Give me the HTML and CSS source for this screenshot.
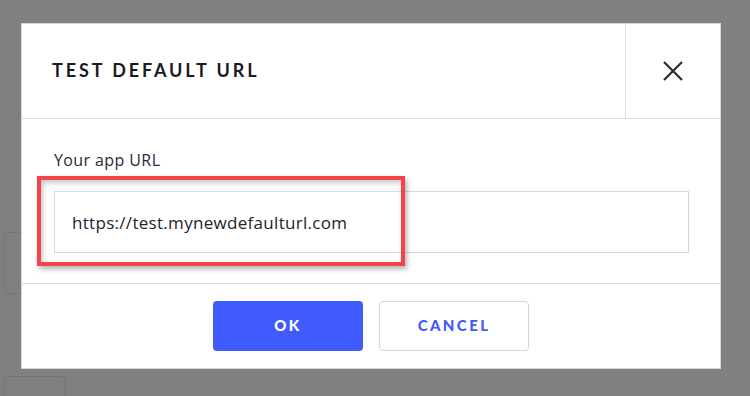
FILE: index.html
```html
<!DOCTYPE html>
<html lang="en">
<head>
  <meta charset="UTF-8">
  <title>Test default URL</title>
  <link rel="stylesheet" href="styles.css">
</head>
<body>
  <div class="page">
    <div class="ghost ghost-side"></div>
    <div class="ghost ghost-bottom"></div>
  </div>

  <div class="overlay">
    <div class="dialog">
      <div class="dialog-header">
        <h2 class="dialog-title">TEST DEFAULT URL</h2>
        <button class="close-btn" aria-label="Close">
          <svg width="22" height="22" viewBox="0 0 22 22">
            <path d="M2 2 L20 20 M20 2 L2 20" stroke="#2b2b33" stroke-width="2.2" fill="none"/>
          </svg>
        </button>
      </div>
      <div class="dialog-body">
        <label class="field-label" for="appUrl">Your app URL</label>
        <input class="field-input" id="appUrl" type="text" value="https://test.mynewdefaulturl.com" readonly>
      </div>
      <div class="dialog-footer">
        <button class="btn btn-primary">OK</button>
        <button class="btn btn-secondary">CANCEL</button>
      </div>
      <!-- annotation drawn on top of the screenshot -->
      <div class="highlight"></div>
    </div>
  </div>
</body>
</html>
```

FILE: styles.css
```css
html, body {
  margin: 0;
  padding: 0;
  width: 750px;
  height: 396px;
  overflow: hidden;
  background-color: #808080;
}

body {
  font-family: "Lato", "Open Sans", sans-serif;
  position: relative;
}

/* page behind the modal */
.page {
  padding: 232px 0 0 4px;
}

.ghost {
  border: 1px solid #767676;
  border-radius: 4px;
  box-sizing: border-box;
}

.ghost-side {
  width: 60px;
  height: 62px;
}

.ghost-bottom {
  width: 62px;
  height: 20px;
  border-bottom: none;
  border-radius: 4px 4px 0 0;
  margin-top: 82px;
}

.overlay {
  position: absolute;
  top: 0;
  left: 0;
  right: 0;
  bottom: 0;
  padding: 23px 0 0 21px;
}

.dialog {
  position: relative;
  width: 700px;
  height: 346px;
  box-sizing: border-box;
  background: #fff;
  border: 1px solid #d6d6de;
  display: flex;
  flex-direction: column;
}

.dialog-header {
  display: flex;
  height: 94px;
  border-bottom: 1px solid #dcdae6;
}

.dialog-title {
  flex: 1;
  margin: 0 0 2px;
  padding-left: 30px;
  display: flex;
  align-items: center;
  font-size: 18px;
  font-weight: 700;
  letter-spacing: 2.9px;
  color: #1a1a22;
}

.close-btn {
  width: 95px;
  border: none;
  border-left: 1px solid #dcdae6;
  background: none;
  display: flex;
  align-items: center;
  justify-content: center;
  padding: 0;
  cursor: pointer;
}

.dialog-body {
  padding: 29px 31px 30px 32px;
  display: flex;
  flex-direction: column;
  border-bottom: 1px solid #dcdae6;
}

.field-label {
  font-family: "Open Sans", sans-serif;
  font-size: 16px;
  line-height: 24px;
  letter-spacing: 0.4px;
  color: #2a2a33;
  margin-bottom: 19px;
}

.field-input {
  height: 62px;
  box-sizing: border-box;
  border: 1px solid #d8d6e6;
  padding: 0 17px;
  font-family: "Open Sans", sans-serif;
  font-size: 17px;
  letter-spacing: 0.3px;
  color: #23232b;
  outline: none;
}

.dialog-footer {
  flex: 1;
  display: flex;
  justify-content: center;
  align-items: flex-start;
  gap: 16px;
  padding-top: 17px;
}

.btn {
  width: 150px;
  height: 50px;
  box-sizing: border-box;
  border-radius: 4px;
  font-family: "Lato", "Open Sans", sans-serif;
  font-size: 15px;
  font-weight: 900;
  letter-spacing: 2.4px;
  padding: 0 0 2px;
  cursor: pointer;
}

.btn-primary {
  background-color: #3f5bfe;
  border: none;
  color: #fff;
}

.btn-secondary {
  background: #fff;
  border: 1px solid #d6d6e0;
  color: #3f5bfe;
}

/* red annotation box */
.highlight {
  position: absolute;
  left: 15px;
  top: 152px;
  width: 368px;
  height: 90px;
  box-sizing: border-box;
  border: 4px solid #f2444a;
  box-shadow: 2px 3px 5px rgba(0, 0, 0, 0.3), inset 2px 3px 5px rgba(0, 0, 0, 0.22);
  pointer-events: none;
}
```
